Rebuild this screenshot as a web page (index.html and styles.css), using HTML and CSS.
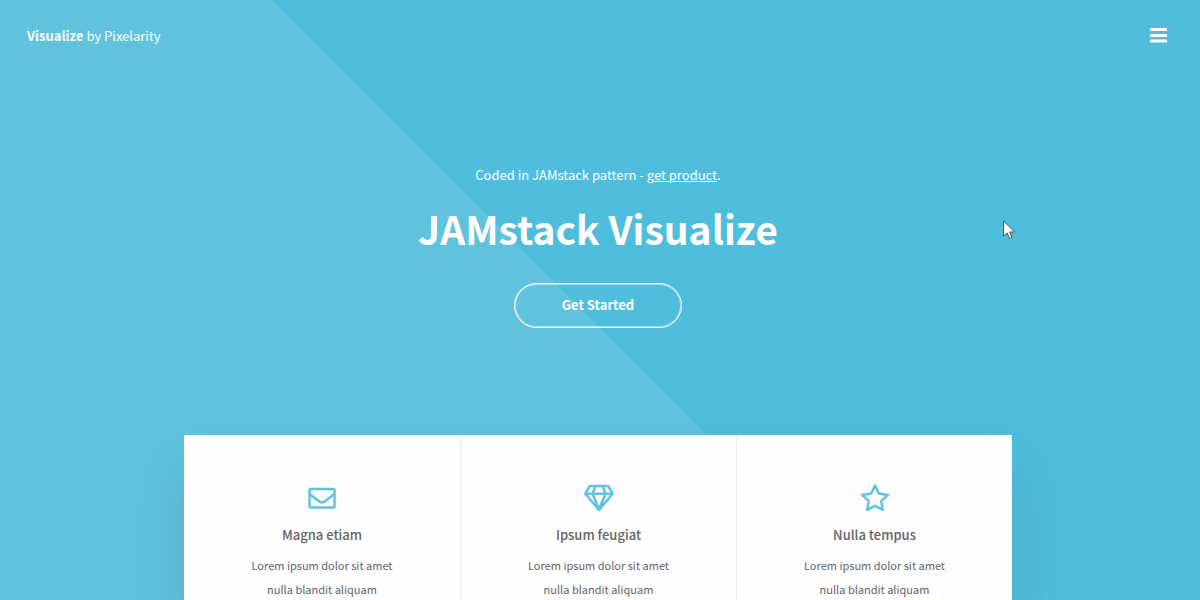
FILE: index.html
```
<!DOCTYPE html>
<html lang="en">
<head>
<meta charset="utf-8">
<meta name="viewport" content="width=device-width, initial-scale=1">
<title>Visualize by Pixelarity</title>
<link rel="stylesheet" href="styles.css">
</head>
<body>
<div class="page">
  <header class="header">
    <a class="logo" href="#"><strong>Visualize</strong> by Pixelarity</a>
    <button class="menu-button" type="button" aria-label="Menu">
      <svg width="17" height="15" viewBox="0 0 17 15" aria-hidden="true"><path fill="#fff" d="M.7 0h15.6q.7 0 .7.7v1.6q0 .7-.7.7H.7Q0 3 0 2.300V.7Q0 0 .7 0zM.7 6h15.6q.7 0 .7.7v1.600q0 .7-.7.7H.7Q0 9 0 8.300V6.700Q0 6 .7 6zM.7 11.500h15.6q.7 0 .7.7v1.600q0 .7-.7.7H.7Q0 14.500 0 13.800v-1.600q0-.7.7-.7z"/></svg>
    </button>
  </header>
  <main class="main">
    <section class="banner">
      <p class="tagline">Coded in JAMstack pattern - <a href="#">get product</a>.</p>
      <h1 class="title">JAMstack Visualize</h1>
      <a class="cta" href="#features">Get Started</a>
    </section>
    <section class="features" id="features">
      <article class="feature">
        <svg class="feature-icon" viewBox="0 0 32 32" aria-hidden="true"><rect x="3.500" y="7" width="25" height="18.500" rx="1.500"/><path d="M3.500 12 L13 19.200 Q16 21.500 19 19.200 L28.500 12"/></svg>
        <h2 class="feature-title">Magna etiam</h2>
        <p class="feature-text">Lorem ipsum dolor sit amet nulla blandit aliquam</p>
      </article>
      <article class="feature">
        <svg class="feature-icon" viewBox="0 0 32 32" aria-hidden="true"><path d="M6.800 4 H25.200 L29.700 11.700 L16 28 L2.300 11.700 Z M2.300 11.700 H29.700 M12.500 4 L9.500 11.700 L16 27.500 L22.500 11.700 L19.500 4"/></svg>
        <h2 class="feature-title">Ipsum feugiat</h2>
        <p class="feature-text">Lorem ipsum dolor sit amet nulla blandit aliquam</p>
      </article>
      <article class="feature">
        <svg class="feature-icon" viewBox="0 0 32 32" aria-hidden="true"><path d="M16 3.500 L19.800 11.500 L28.800 12.900 L22.300 19.200 L23.800 27.900 L16 23.800 L8.200 27.900 L9.700 19.200 L3.200 12.900 L12.200 11.500 Z"/></svg>
        <h2 class="feature-title">Nulla tempus</h2>
        <p class="feature-text">Lorem ipsum dolor sit amet nulla blandit aliquam</p>
      </article>
    </section>
  </main>
  <svg class="pointer" width="13" height="20" viewBox="0 0 13 20" aria-hidden="true"><path d="M.5 .8 V16.200 L4.200 13 L6.600 18.500 L9 17.500 L6.700 12 H11.500 Z" fill="#fff" stroke="#4d5360"/></svg>
</div>
</body>
</html>
```
FILE: styles.css
```
* {
  box-sizing: border-box;
}

body {
  margin: 0;
  font-family: "Noto Sans CJK JP", "Noto Sans", sans-serif;
  color: #fff;
}

.page {
  position: relative;
  display: flex;
  flex-direction: column;
  min-height: 100vh;
  background: linear-gradient(45deg, #60c3de calc(50% - 20px), #4fbedd calc(50% - 19px));
}

.header {
  display: flex;
  align-items: flex-start;
  justify-content: space-between;
  padding: 24px 33px 24px 27px;
}

.logo {
  color: inherit;
  font-size: 13px;
  line-height: 24px;
  text-decoration: none;
}

.menu-button {
  display: flex;
  padding: 4px 0;
  border: 0;
  background: none;
  cursor: pointer;
}

.main {
  display: flex;
  flex: 1;
  flex-direction: column;
  align-items: center;
  padding-right: 4px;
}

.banner {
  display: flex;
  flex-direction: column;
  align-items: center;
  padding: 91px 0 107px;
}

.tagline {
  margin: 0;
  font-size: 13px;
  line-height: 24px;
}

.tagline a {
  color: inherit;
}

.title {
  margin: 13px 0 27px;
  font-size: 39px;
  line-height: 56px;
  font-weight: 700;
}

.cta {
  width: 168px;
  padding-bottom: 2px;
  border: 1px solid #fff;
  border-radius: 24px;
  box-shadow: inset 0 0 0 1px rgba(255, 255, 255, 0.5);
  color: inherit;
  font-size: 13px;
  font-weight: 700;
  line-height: 41px;
  text-align: center;
  text-decoration: none;
}

.features {
  display: grid;
  flex: 1;
  grid-template-columns: repeat(3, 1fr);
  width: 100%;
  max-width: 828px;
  background: #fefefe;
  box-shadow: 0 32px 56px rgba(70, 80, 90, 0.18);
  clip-path: inset(-80px -80px 0 -80px);
  color: #646464;
}

.feature {
  display: flex;
  flex-direction: column;
  align-items: center;
  padding: 47px 64px 0;
  text-align: center;
}

.feature + .feature {
  border-left: 1px solid #ececec;
}

.feature-icon {
  width: 32px;
  height: 32px;
  fill: none;
  stroke: #5fc3df;
  stroke-width: 2.5;
  stroke-linejoin: round;
}

.feature-title {
  margin: 9px 0 6px;
  font-size: 13px;
  font-weight: 500;
  line-height: 24px;
}

.feature-text {
  margin: 0;
  font-size: 11px;
  line-height: 24px;
}

.pointer {
  position: absolute;
  top: 220px;
  left: 1003px;
}
```
